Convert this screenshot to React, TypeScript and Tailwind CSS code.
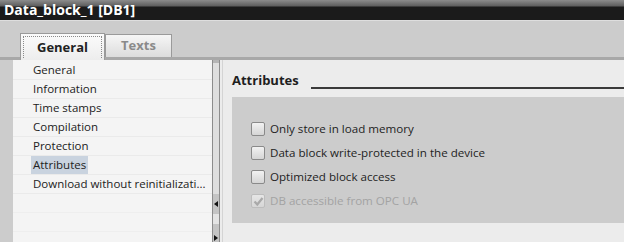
import React from "react";

const font = { fontFamily: '"Open Sans", "Noto Sans", "DejaVu Sans", sans-serif' };

function Checkbox({ label, checked, disabled }: { label: string; checked?: boolean; disabled?: boolean }) {
  return (
    <div className="flex items-center h-[24px]">
      <div
        className={
          "w-[14px] h-[14px] rounded-[2px] border flex items-center justify-center " +
          (disabled
            ? "border-[#bdbdbd] bg-[linear-gradient(#e6e6e6,#d6d6d6)]"
            : "border-[#8a8a8a] bg-[linear-gradient(#f2f2f2,#d5d5d5)]")
        }
      >
        {checked && (
          <svg width="11" height="11" viewBox="0 0 11 11">
            <path d="M1.5 5.5 L4.3 8.5 L9.5 2" fill="none" stroke="#a9a9a9" strokeWidth="2.2" />
          </svg>
        )}
      </div>
      <span className={"ml-[5px] text-[11.6px] leading-none " + (disabled ? "text-[#a3a3a3]" : "text-[#1e1e1e]")}>
        {label}
      </span>
    </div>
  );
}

export default function App() {
  const items = [
    "General",
    "Information",
    "Time stamps",
    "Compilation",
    "Protection",
    "Attributes",
    "Download without reinitializati...",
  ];
  return (
    <div className="w-[624px] h-[242px] overflow-hidden bg-[#cccccc] flex flex-col" style={font}>
      <div className="h-[20px] bg-[linear-gradient(#8c8c8c_0px,#5e5e5e_6px,#1b1b1b_7px,#1b1b1b_100%)] text-white font-bold text-[14px] leading-[20px] pl-[4px]">
        Data_block_1 [DB1]
      </div>
      <div className="h-[1px] bg-[#dedede]" />
      <div className="h-[39px] flex items-end pl-[20px] border-b-[3px] border-[#a8a8a8]">
        <div className="relative z-10 mb-[-3px] w-[85px] h-[27px] border border-b-0 border-[#9a9a9a] bg-[linear-gradient(#fbfbfb,#ededed)] p-[2px]">
          <div className="h-full border border-dotted border-[#8a8a8a] border-b-0 flex items-start justify-center pt-[1px] text-[13px] font-bold text-[#222]">
            General
          </div>
        </div>
        <div className="w-[67px] h-[23px] border border-b-0 border-[#9a9a9a] bg-[linear-gradient(#f6f6f6,#dcdcdc)] flex items-start justify-center pt-[1px] text-[13px] font-bold text-[#8a8a8a]">
          Texts
        </div>
      </div>
      <div className="flex-1 flex">
        <div className="w-[13px]" />
        <div className="w-[199px] bg-[#f4f4f4] pt-[1px] flex flex-col">
          {items.map((it, i) => (
            <div key={it} className="h-[19px] border-b border-[#eaeaea] flex items-center pl-[18px]">
              <span
                className={
                  "text-[11.5px] leading-[18px] text-[#222] px-[2px] " + (i === 5 ? "bg-[#c9d3df]" : "")
                }
              >
                {it}
              </span>
            </div>
          ))}
          <div className="h-[19px] border-b border-[#eeeeee]" />
          <div className="h-[19px] border-b border-[#eeeeee]" />
        </div>
        <div className="w-[8px] border-x border-[#8c8c8c] bg-[#dedede] flex flex-col">
          <div className="h-[3px] bg-[#b5b5b5]" />
          <div className="flex-1" />
          <div className="h-[20px] bg-[#c4c4c4] flex items-center justify-center">
            <svg width="4" height="6" viewBox="0 0 4 6"><path d="M4 0 L0 3 L4 6 Z" fill="#111" /></svg>
          </div>
          <div className="h-[10px] bg-[#e4e4e4]" />
          <div className="h-[18px] bg-[#c4c4c4] flex items-end justify-center pb-[1px]">
            <svg width="4" height="6" viewBox="0 0 4 6"><path d="M0 0 L4 3 L0 6 Z" fill="#111" /></svg>
          </div>
        </div>
        <div className="w-[2px] bg-[#ececec]" />
        <div className="w-[1px] bg-[#d4d4d4]" />
        <div className="flex-1 bg-[#ececec] pl-[9px] flex flex-col">
          <div className="h-[37px] flex items-start pt-[12px]">
            <span className="text-[13px] font-bold text-[#1e1e1e] leading-[16px]">Attributes</span>
            <div className="flex-1 ml-[12px] mt-[15px] h-[2px] bg-[#3a3a3a]" />
          </div>
          <div className="h-[126px] bg-[#cccccc] pl-[19px] pt-[20px] flex flex-col">
            <Checkbox label="Only store in load memory" />
            <Checkbox label="Data block write-protected in the device" />
            <Checkbox label="Optimized block access" />
            <Checkbox label="DB accessible from OPC UA" checked disabled />
          </div>
        </div>
      </div>
    </div>
  );
}
